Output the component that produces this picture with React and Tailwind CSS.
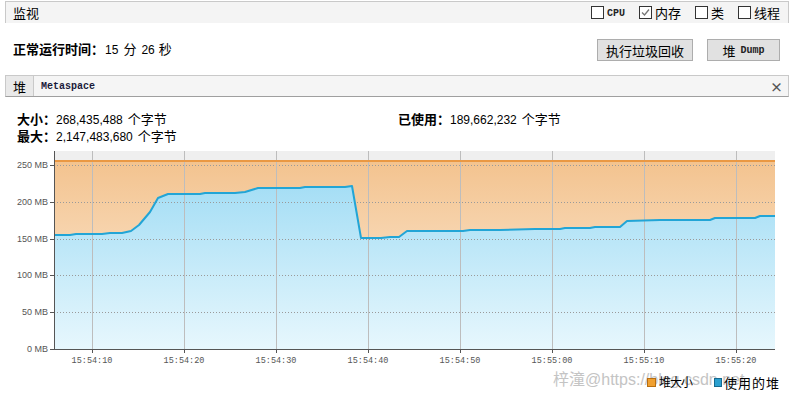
import React from 'react';

const cjk = "font-['Noto_Sans_CJK_SC','Liberation_Sans',sans-serif]";
const num = "font-['Liberation_Sans','Noto_Sans_CJK_SC',sans-serif]";
const mono = "font-['Liberation_Mono',monospace]";

const used = [
  [54, 235], [70, 235], [76, 234], [102, 234], [110, 233], [122, 233], [131, 231], [139, 225],
  [150, 212], [158, 198], [168, 194], [200, 194], [205, 193], [235, 193], [245, 192], [258, 188],
  [300, 188], [305, 187], [345, 187], [352, 186], [361, 238], [381, 238], [390, 237], [399, 237],
  [407, 231], [463, 231], [470, 230], [500, 230], [535, 229], [560, 229], [565, 228], [590, 228],
  [595, 227], [620, 227], [627, 221], [660, 220], [710, 220], [715, 218], [755, 218], [760, 216],
  [775, 216],
];

const yTicks = [
  [165, '250 MB'], [202, '200 MB'], [239, '150 MB'], [275, '100 MB'], [312, '50 MB'], [349, '0 MB'],
];

const xTicks = [
  [92, '15:54:10'], [184, '15:54:20'], [276, '15:54:30'], [368, '15:54:40'],
  [460, '15:54:50'], [552, '15:55:00'], [644, '15:55:10'], [736, '15:55:20'],
];

function Checkbox({ label, checked, labelClass }) {
  return (
    <div className="flex items-center gap-[3px]">
      <div className="w-[13px] h-[13px] border border-[#333] bg-white flex items-center justify-center">
        {checked && (
          <svg width="11" height="11" viewBox="0 0 11 11">
            <path d="M2 5.5 L4.5 8 L9 2.5" fill="none" stroke="#777" strokeWidth="1.3" />
          </svg>
        )}
      </div>
      <span className={labelClass}>{label}</span>
    </div>
  );
}

function HeapChart() {
  const line = used.map((p) => p.join(',')).join(' ');
  const area = `54,349 ${line} 775,349`;
  return (
    <svg width="793" height="228" viewBox="0 144 793 228" className="block">
      <defs>
        <linearGradient id="og" x1="0" y1="161" x2="0" y2="349" gradientUnits="userSpaceOnUse">
          <stop offset="0" stopColor="#f3c38f" />
          <stop offset="1" stopColor="#fdeedd" />
        </linearGradient>
        <linearGradient id="bg" x1="0" y1="186" x2="0" y2="349" gradientUnits="userSpaceOnUse">
          <stop offset="0" stopColor="#a5def5" />
          <stop offset="1" stopColor="#e7f7fd" />
        </linearGradient>
      </defs>
      <rect x="54" y="151" width="721" height="198" fill="#efefef" />
      <rect x="54" y="161" width="721" height="188" fill="url(#og)" />
      <polygon points={area} fill="url(#bg)" />
      {yTicks.slice(0, 5).map(([y]) => (
        <line key={y} x1="54" x2="775" y1={y + 0.5} y2={y + 0.5} stroke="#9a9a9a" strokeDasharray="1 2" />
      ))}
      {xTicks.map(([x]) => (
        <line key={x} x1={x + 0.5} x2={x + 0.5} y1="151" y2="349" stroke="#bdbdbd" />
      ))}
      <line x1="54" x2="775" y1="161" y2="161" stroke="#ea9843" strokeWidth="2" />
      <polyline points={line} fill="none" stroke="#22a5d6" strokeWidth="2" strokeLinejoin="round" />
      <line x1="54.5" x2="54.5" y1="151" y2="350" stroke="#555" />
      <line x1="54" x2="775" y1="349.5" y2="349.5" stroke="#555" />
      {yTicks.map(([y, t]) => (
        <g key={t}>
          <line x1="50" x2="54" y1={y + 0.5} y2={y + 0.5} stroke="#555" />
          <text x="48" y={y + 3} textAnchor="end" fontSize="9" fill="#555" fontFamily="Liberation Sans">
            {t}
          </text>
        </g>
      ))}
      {xTicks.map(([x, t]) => (
        <g key={t}>
          <line x1={x + 0.5} x2={x + 0.5} y1="349" y2="353" stroke="#555" />
          <text x={x} y="363" textAnchor="middle" fontSize="8.5" fill="#555" fontFamily="Liberation Mono">
            {t}
          </text>
        </g>
      ))}
    </svg>
  );
}

export default function App() {
  return (
    <div className={`w-[793px] h-[395px] bg-white relative overflow-hidden text-black ${cjk}`}>
      {/* header */}
      <div className="ml-[5px] mr-[4px] mt-[1px] h-[22px] border border-b-0 border-[#c9c9c9] bg-[#f4f4f4] flex items-center justify-between pl-[7px] pr-[8px]">
        <span className="text-[13px] leading-none">监视</span>
        <div className="flex items-center gap-[14px] text-[13px] leading-none">
          <Checkbox label="CPU" labelClass={`${mono} text-[10px] leading-[13px] font-bold text-[#222] pt-[1px]`} />
          <Checkbox label="内存" checked />
          <Checkbox label="类" />
          <Checkbox label="线程" />
        </div>
      </div>

      {/* uptime + buttons */}
      <div className="h-[52px] flex items-center justify-between pl-[13px] pr-[13px] pt-[2px]">
        <div className="flex items-baseline text-[13px] -mt-[3px]">
          <span className="font-bold">正常运行时间：</span>
          <span className={`${num} text-[12px] ml-[1px]`}>15</span>
          <span className="ml-[5px]">分</span>
          <span className={`${num} text-[12px] ml-[5px]`}>26</span>
          <span className="ml-[4px]">秒</span>
        </div>
        <div className="flex items-center gap-[14px]">
          <button className="w-[96px] h-[22px] bg-[#e1e1e1] border border-[#adadad] text-[13px] leading-none flex items-center justify-center">
            执行垃圾回收
          </button>
          <button className="w-[73px] h-[22px] bg-[#e1e1e1] border border-[#adadad] text-[13px] leading-none flex items-center justify-center gap-[5px]">
            <span>堆</span>
            <span className={`${mono} text-[10px] leading-[13px] font-bold text-[#222] pt-[1px]`}>Dump</span>
          </button>
        </div>
      </div>

      {/* tabs */}
      <div className="ml-[5px] mr-[4px] h-[22px] border border-[#c9c9c9] border-b-[#9f9f9f] bg-[#f5f5f5] flex items-stretch">
        <div className="w-[28px] bg-[#e9e9e9] border-r border-[#c9c9c9] flex items-center justify-center text-[13px] leading-none">
          堆
        </div>
        <div className={`${mono} text-[10px] leading-[13px] font-bold text-[#1a1a3a] flex items-center pl-[7px]`}>Metaspace</div>
        <div className="ml-auto pr-[5px] flex items-center text-[#555] text-[13px] font-bold leading-none">×</div>
      </div>

      {/* info */}
      <div className="mt-[13px] h-[34px] flex text-[13px] leading-[17px]">
        <div className="pl-[17px] w-[398px]">
          <div className="h-[17px] flex items-baseline">
            <span className="font-bold">大小：</span>
            <span className={`${num} text-[12px]`}>268,435,488</span>
            <span className="ml-[5px]">个字节</span>
          </div>
          <div className="h-[17px] flex items-baseline">
            <span className="font-bold">最大：</span>
            <span className={`${num} text-[12px]`}>2,147,483,680</span>
            <span className="ml-[5px]">个字节</span>
          </div>
        </div>
        <div className="flex items-baseline h-[17px]">
          <span className="font-bold">已使用：</span>
          <span className={`${num} text-[12px]`}>189,662,232</span>
          <span className="ml-[5px]">个字节</span>
        </div>
      </div>

      <HeapChart />

      {/* watermark */}
      <div className="absolute left-[553px] top-[368px] text-[16px] text-[#c4c4c4] font-['Liberation_Sans','Noto_Sans_CJK_SC',sans-serif] whitespace-nowrap">
        梓潼@https://blog.csdn.net
      </div>

      {/* legend */}
      <div className="relative h-[20px] flex items-center justify-end pr-[13px] text-[13px] leading-none">
        <div className="w-[9px] h-[9px] bg-[#f0a030] border border-[#b86e10]" />
        <span className="ml-[3px] text-[12px] tracking-[-1px]">堆大小</span>
        <div className="ml-[22px] w-[8px] h-[9px] bg-[#2aa0d0] border border-[#156a90]" />
        <span className="ml-[2px] tracking-[1px]">使用的堆</span>
      </div>
    </div>
  );
}
